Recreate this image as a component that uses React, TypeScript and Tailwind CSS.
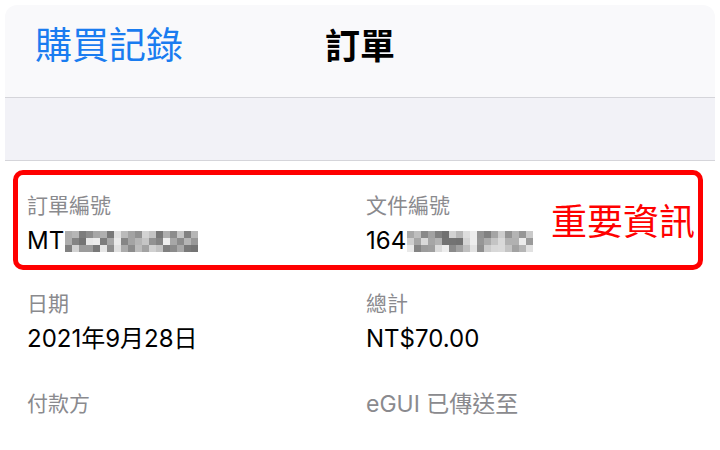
const grays = (seed: number, n: number) => {
  let s = seed;
  const out: string[] = [];
  for (let i = 0; i < n; i++) {
    s = (s * 9301 + 49297) % 233280;
    const v = 110 + Math.floor((s / 233280) * 130);
    out.push(`rgb(${v},${v},${v})`);
  }
  return out;
};

const Mosaic = ({ seed, cols }: { seed: number; cols: number }) => {
  const cells = grays(seed, cols * 3);
  return (
    <div
      className="grid h-[21px] ml-[1px]"
      style={{ gridTemplateColumns: `repeat(${cols}, 7px)` }}
    >
      {cells.map((c, i) => (
        <div key={i} className="h-[7px]" style={{ backgroundColor: c }} />
      ))}
    </div>
  );
};

const Field = ({
  label,
  big,
  children,
}: {
  label: string;
  big?: boolean;
  children?: React.ReactNode;
}) => (
  <div className="flex flex-col">
    <div
      className={
        big
          ? "text-[23px] leading-[28px] text-[#8a8a8e] whitespace-nowrap"
          : "text-[21px] leading-[28px] text-[#8a8a8e] whitespace-nowrap"
      }
    >
      {label}
    </div>
    <div className="mt-[4px] text-[24px] leading-[34px] text-black flex items-center h-[34px] whitespace-nowrap">
      {children}
    </div>
  </div>
);

export default function App() {
  return (
    <div className="w-[720px] h-[450px] overflow-hidden bg-white px-[5px] pt-[5px] [font-family:Inter,'Noto_Sans_CJK_TC',sans-serif]">
      {/* Nav bar */}
      <div className="h-[93px] rounded-t-[12px] bg-[#f9f9fb] border-b border-[#d5d5da] flex items-start pt-[18px] pl-[30px]">
        <div className="w-[290px] text-[37px] leading-[46px] text-[#1a7cf0]">
          購買記錄
        </div>
        <div className="text-[35px] leading-[46px] font-bold text-black">
          訂單
        </div>
      </div>

      {/* Grey band */}
      <div className="h-[63px] bg-[#f2f2f7] border-b border-[#d5d5da]" />

      {/* Details */}
      <div className="pl-[8px] pt-[9px]">
        <div className="w-[690px] h-[100px] border-[5px] border-[#ff0000] rounded-[10px] flex items-start pt-[17px] pl-[9px]">
          <div className="w-[339px] shrink-0">
            <Field label="訂單編號">
              <span>MT</span>
              <Mosaic seed={7} cols={19} />
            </Field>
          </div>
          <div className="w-[185px] shrink-0">
            <Field label="文件編號">
              <span>164</span>
              <Mosaic seed={31} cols={18} />
            </Field>
          </div>
          <div className="self-center -mt-[14px] whitespace-nowrap text-[36px] leading-[44px] text-[#ff0000]">
            重要資訊
          </div>
        </div>

        <div className="flex pl-[14px] pt-[20px]">
          <div className="w-[339px]">
            <Field label="日期">2021年9月28日</Field>
          </div>
          <div>
            <Field label="總計">NT$70.00</Field>
          </div>
        </div>

        <div className="flex pl-[14px] pt-[34px]">
          <div className="w-[339px]">
            <Field label="付款方" />
          </div>
          <div>
            <Field label="eGUI 已傳送至" big />
          </div>
        </div>
      </div>
    </div>
  );
}
